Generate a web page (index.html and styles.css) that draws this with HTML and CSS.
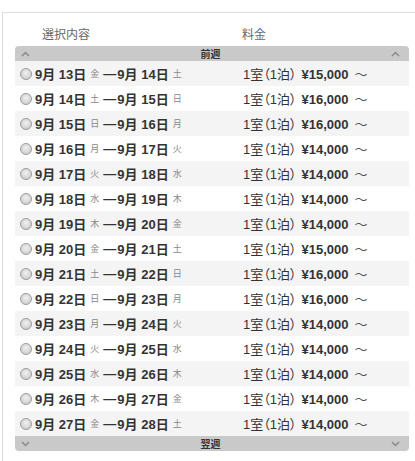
FILE: index.html
```html
<!DOCTYPE html>
<html lang="ja">
<head>
<meta charset="utf-8">
<link rel="stylesheet" href="styles.css">
</head>
<body>
<div class="wrap">
  <div class="head">
    <span class="h-sel">選択内容</span>
    <span class="h-price">料金</span>
  </div>
  <div class="bar bar-top">
    <svg class="chev" width="9" height="6" viewBox="0 0 9 6"><path d="M1 5 L4.5 1.5 L8 5" fill="none" stroke="#8a8a8a" stroke-width="1.5"/></svg>
    <span class="bar-label">前週</span>
    <svg class="chev" width="9" height="6" viewBox="0 0 9 6"><path d="M1 5 L4.5 1.5 L8 5" fill="none" stroke="#8a8a8a" stroke-width="1.5"/></svg>
  </div>
  <div class="rows">
    <div class="row"><span class="radio"></span><span class="d">9月 13日</span><span class="w">金</span><span class="dash">—</span><span class="d">9月 14日</span><span class="w">土</span><span class="p"><span class="room">1室（1泊）</span><b>¥15,000</b><span class="t">～</span></span></div>
    <div class="row"><span class="radio"></span><span class="d">9月 14日</span><span class="w">土</span><span class="dash">—</span><span class="d">9月 15日</span><span class="w">日</span><span class="p"><span class="room">1室（1泊）</span><b>¥16,000</b><span class="t">～</span></span></div>
    <div class="row"><span class="radio"></span><span class="d">9月 15日</span><span class="w">日</span><span class="dash">—</span><span class="d">9月 16日</span><span class="w">月</span><span class="p"><span class="room">1室（1泊）</span><b>¥16,000</b><span class="t">～</span></span></div>
    <div class="row"><span class="radio"></span><span class="d">9月 16日</span><span class="w">月</span><span class="dash">—</span><span class="d">9月 17日</span><span class="w">火</span><span class="p"><span class="room">1室（1泊）</span><b>¥14,000</b><span class="t">～</span></span></div>
    <div class="row"><span class="radio"></span><span class="d">9月 17日</span><span class="w">火</span><span class="dash">—</span><span class="d">9月 18日</span><span class="w">水</span><span class="p"><span class="room">1室（1泊）</span><b>¥14,000</b><span class="t">～</span></span></div>
    <div class="row"><span class="radio"></span><span class="d">9月 18日</span><span class="w">水</span><span class="dash">—</span><span class="d">9月 19日</span><span class="w">木</span><span class="p"><span class="room">1室（1泊）</span><b>¥14,000</b><span class="t">～</span></span></div>
    <div class="row"><span class="radio"></span><span class="d">9月 19日</span><span class="w">木</span><span class="dash">—</span><span class="d">9月 20日</span><span class="w">金</span><span class="p"><span class="room">1室（1泊）</span><b>¥14,000</b><span class="t">～</span></span></div>
    <div class="row"><span class="radio"></span><span class="d">9月 20日</span><span class="w">金</span><span class="dash">—</span><span class="d">9月 21日</span><span class="w">土</span><span class="p"><span class="room">1室（1泊）</span><b>¥15,000</b><span class="t">～</span></span></div>
    <div class="row"><span class="radio"></span><span class="d">9月 21日</span><span class="w">土</span><span class="dash">—</span><span class="d">9月 22日</span><span class="w">日</span><span class="p"><span class="room">1室（1泊）</span><b>¥16,000</b><span class="t">～</span></span></div>
    <div class="row"><span class="radio"></span><span class="d">9月 22日</span><span class="w">日</span><span class="dash">—</span><span class="d">9月 23日</span><span class="w">月</span><span class="p"><span class="room">1室（1泊）</span><b>¥16,000</b><span class="t">～</span></span></div>
    <div class="row"><span class="radio"></span><span class="d">9月 23日</span><span class="w">月</span><span class="dash">—</span><span class="d">9月 24日</span><span class="w">火</span><span class="p"><span class="room">1室（1泊）</span><b>¥14,000</b><span class="t">～</span></span></div>
    <div class="row"><span class="radio"></span><span class="d">9月 24日</span><span class="w">火</span><span class="dash">—</span><span class="d">9月 25日</span><span class="w">水</span><span class="p"><span class="room">1室（1泊）</span><b>¥14,000</b><span class="t">～</span></span></div>
    <div class="row"><span class="radio"></span><span class="d">9月 25日</span><span class="w">水</span><span class="dash">—</span><span class="d">9月 26日</span><span class="w">木</span><span class="p"><span class="room">1室（1泊）</span><b>¥14,000</b><span class="t">～</span></span></div>
    <div class="row"><span class="radio"></span><span class="d">9月 26日</span><span class="w">木</span><span class="dash">—</span><span class="d">9月 27日</span><span class="w">金</span><span class="p"><span class="room">1室（1泊）</span><b>¥14,000</b><span class="t">～</span></span></div>
    <div class="row"><span class="radio"></span><span class="d">9月 27日</span><span class="w">金</span><span class="dash">—</span><span class="d">9月 28日</span><span class="w">土</span><span class="p"><span class="room">1室（1泊）</span><b>¥14,000</b><span class="t">～</span></span></div>
  </div>
  <div class="bar bar-bottom">
    <svg class="chev" width="9" height="6" viewBox="0 0 9 6"><path d="M1 1 L4.5 4.5 L8 1" fill="none" stroke="#8a8a8a" stroke-width="1.5"/></svg>
    <span class="bar-label">翌週</span>
    <svg class="chev" width="9" height="6" viewBox="0 0 9 6"><path d="M1 1 L4.5 4.5 L8 1" fill="none" stroke="#8a8a8a" stroke-width="1.5"/></svg>
  </div>
</div>
</body>
</html>
```
FILE: styles.css
```css
html, body {
  margin: 0;
  padding: 0;
  background: #fff;
}
body {
  font-family: "Liberation Sans", "Noto Sans CJK JP", sans-serif;
  color: #333;
}
.wrap {
  margin: 12px 0 0 2px;
  border-top: 1px solid #dcdcdc;
  border-left: 1px solid #dcdcdc;
  padding: 0 6px 10px 12px;
}
.head {
  display: flex;
  height: 33px;
  align-items: flex-end;
  padding-bottom: 3px;
  box-sizing: border-box;
  font-size: 12px;
  line-height: 16px;
  color: #666;
}
.h-sel {
  margin-left: 27px;
  width: 200px;
}
.bar {
  display: flex;
  align-items: center;
  justify-content: space-between;
  height: 15px;
  background: #c9c9c9;
  padding: 0 9px 0 6px;
}
.bar-top {
  border-radius: 4px 4px 0 0;
}
.bar-bottom {
  border-radius: 0 0 4px 4px;
}
.bar-label {
  font-size: 10px;
  font-weight: bold;
  color: #333;
}
.chev {
  display: block;
}
.row {
  display: flex;
  align-items: center;
  height: 25px;
  font-size: 13px;
  white-space: nowrap;
}
.row:nth-child(odd) {
  background: #f4f4f4;
}
.radio {
  width: 12px;
  height: 12px;
  border-radius: 50%;
  border: 1px solid #9c9c9c;
  background: radial-gradient(circle at 50% 40%, #f0f0f0 0%, #d4d4d4 65%, #bdbdbd 100%);
  box-sizing: border-box;
  margin-left: 5px;
  margin-right: 3px;
  flex: none;
}
.d {
  font-weight: bold;
  color: #333;
}
.w {
  font-size: 9px;
  color: #888;
  margin: 0 4px 0 4px;
}
.dash {
  font-weight: bold;
  color: #333;
  margin-right: 1px;
}
.p {
  margin-left: auto;
  width: 166px;
  color: #333;
}
.room {
  font-feature-settings: "palt" 1;
}
.p b {
  margin-left: 5px;
}
.t {
  margin-left: 6px;
  color: #555;
}
```
